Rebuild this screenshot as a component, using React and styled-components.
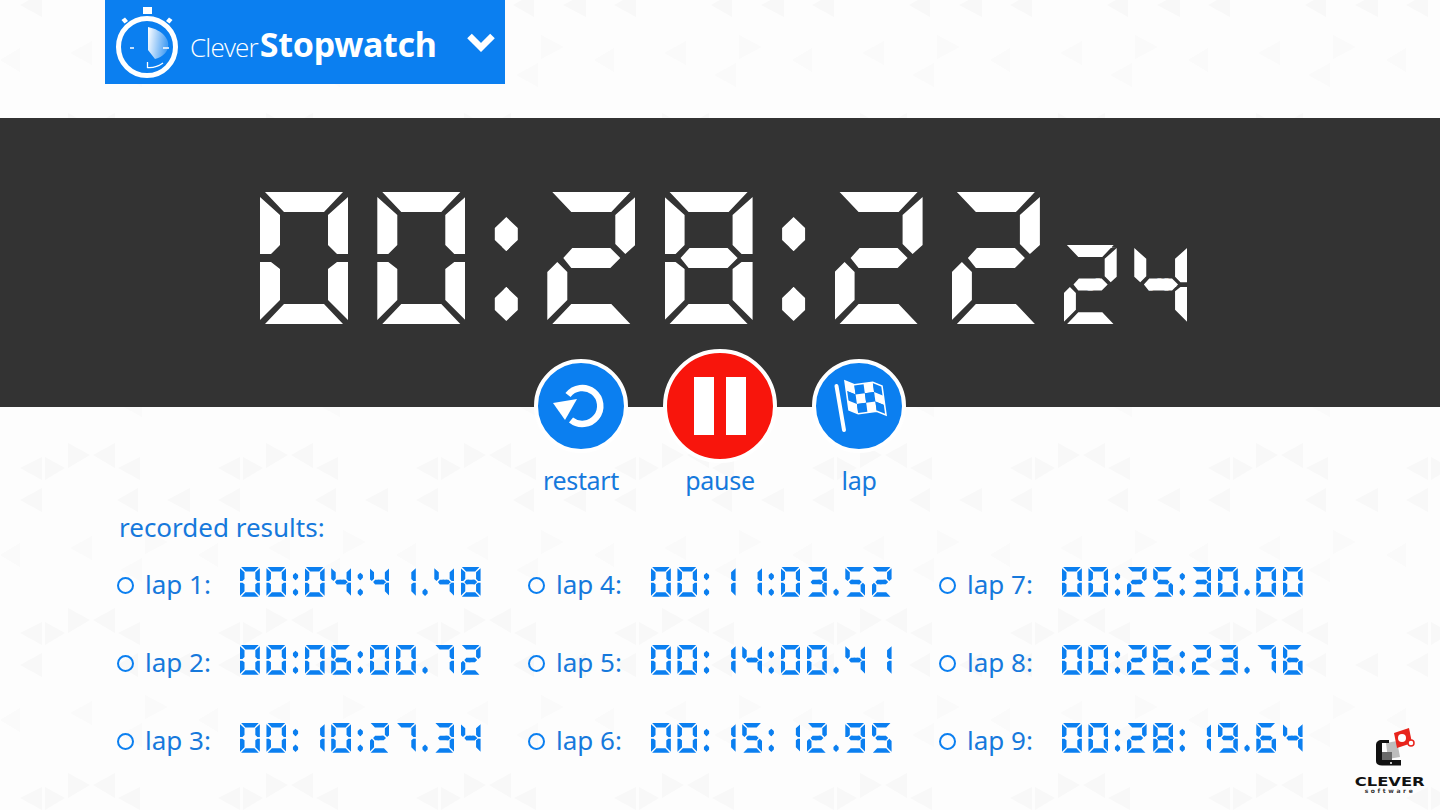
import React from "react";
import styled, { createGlobalStyle } from "styled-components";

const BLUE = "#0b7ff0";
const TEXT_BLUE = "#1679dc";
const FONT = `"Noto Sans", "Open Sans", sans-serif`;

// light triangles behind the page
const tri = (pts, fill = "#f8f8f8") => `<polygon points='${pts}' fill='${fill}'/>`;
const tile = `<svg xmlns='http://www.w3.org/2000/svg' width='198' height='165'>${[
  tri("20,38 42,27 42,50"),
  tri("45,27 65,38 45,50"),
  tri("68,13 90,25 68,38"),
  tri("93,25 115,13 115,38"),
  tri("118,38 140,27 140,50"),
  tri("20,70 42,58 42,82"),
  tri("117,70 138,58 138,82"),
  tri("167,70 190,58 190,82"),
  tri("70,118 92,106 92,130", "#fafafa"),
  tri("145,100 168,112 145,124", "#fafafa"),
  tri("0,125 20,113 20,137", "#fafafa"),
  tri("120,140 142,128 142,152", "#fafafa"),
].join("")}</svg>`;

const GlobalStyle = createGlobalStyle`
  html, body {
    margin: 0;
    height: 100%;
    overflow: hidden;
  }
  body {
    background-color: #fdfdfd;
    background-image: url("data:image/svg+xml,${encodeURIComponent(tile)}");
    background-position: 0 100px;
    font-family: ${FONT};
  }
`;

// seven segment shapes, in a 88 x 132 cell
const SEG = {
  T: [[5, 0], [83, 0], [64, 20], [24, 20]],
  B: [[5, 132], [24, 112], [64, 112], [83, 132]],
  M: [[16, 66], [25, 56], [63, 56], [73, 66], [63, 76], [24, 76]],
  UL: [[0, 5], [20, 23], [20, 53], [11, 62], [0, 62]],
  ULp: [[0, 5], [20, 23], [20, 52], [10, 62], [0, 53]],
  UR: [[88, 5], [68, 23], [68, 53], [77, 62], [88, 62]],
  URp: [[88, 5], [68, 23], [68, 52], [78, 62], [88, 53]],
  LL: [[0, 70], [11, 70], [20, 77], [20, 108], [0, 128]],
  LLp: [[0, 80], [10, 70], [20, 80], [20, 108], [0, 128]],
  LR: [[88, 70], [77, 70], [68, 77], [68, 108], [88, 128]],
  LRp: [[88, 80], [78, 70], [68, 80], [68, 108], [88, 128]],
};

const dot = (y) => [[41, y], [52.5, y + 11], [52.5, y + 23], [41, y + 34], [29.5, y + 23], [29.5, y + 11]];

const SHAPES = {
  0: ["T", "UL", "UR", "LL", "LR", "B"],
  1: ["UR", "LR"],
  2: ["T", "URp", "M", "LLp", "B"],
  3: ["T", "UR", "M", "LR", "B"],
  4: ["ULp", "UR", "M", "LR"],
  5: ["T", "ULp", "M", "LRp", "B"],
  6: ["T", "ULp", "M", "LL", "LR", "B"],
  7: ["T", "UR", "LR"],
  8: ["T", "UL", "UR", "M", "LL", "LR", "B"],
  9: ["T", "UL", "UR", "M", "LR", "B"],
};

// all the parts go in one polygon, joined by lines that are walked back again
const toClip = (parts, w) => {
  const pct = ([x, y]) => `${((x / w) * 100).toFixed(2)}% ${((y / 132) * 100).toFixed(2)}%`;
  const walk = [];
  parts.forEach((p) => walk.push(...p, p[0]));
  parts.slice(0, -1).reverse().forEach((p) => walk.push(p[0]));
  return walk.map(pct).join(",");
};

const clipFor = (ch) => {
  if (ch === ":") return toClip([dot(25), dot(95)], 82);
  if (ch === ".") return toClip([dot(95)], 82);
  return toClip(SHAPES[ch].map((k) => SEG[k]), 88);
};

const Glyph = styled.span`
  flex: none;
  display: block;
  width: ${(p) => p.$w * p.$u}px;
  height: ${(p) => 132 * p.$u}px;
  margin-left: ${(p) => (p.$gap ? 29.3 * p.$u : 0)}px;
  overflow: hidden;
  text-align: center;
  font-size: ${(p) => 80 * p.$u}px;
  line-height: ${(p) => 132 * p.$u}px;
  background: ${(p) => p.$color};
  color: ${(p) => p.$color};
  clip-path: polygon(${(p) => clipFor(p.$ch)});
`;

const ReadoutRow = styled.div`
  display: flex;
  flex: none;
`;

const Readout = ({ value, u, color }) => (
  <ReadoutRow>
    {value.split("").map((ch, i) => {
      const isDigit = /\d/.test(ch);
      const gap = isDigit && i > 0 && /\d/.test(value[i - 1]);
      return (
        <Glyph key={i} $ch={ch} $w={isDigit ? 88 : 82} $u={u} $gap={gap} $color={color}>
          {ch}
        </Glyph>
      );
    })}
  </ReadoutRow>
);

const Page = styled.div`
  width: 1440px;
  height: 810px;
  overflow: hidden;
`;

const Header = styled.div`
  width: 400px;
  height: 84px;
  margin-left: 105px;
  background: ${BLUE};
  display: flex;
  align-items: center;
  color: #fff;
`;

const Brand = styled.div`
  display: flex;
  align-items: baseline;
  width: 277px;
  margin-top: 3px;
`;

const BrandLight = styled.span`
  font-family: "Open Sans", sans-serif;
  font-weight: 300;
  font-size: 26px;
  letter-spacing: -0.8px;
  margin-right: 2px;
`;

const BrandBold = styled.span`
  font-weight: 700;
  font-size: 34px;
  letter-spacing: -0.3px;
`;

const Band = styled.div`
  margin-top: 34px;
  height: 289px;
  box-sizing: border-box;
  padding: 74px 0 0 260px;
  background: #333333;
  display: flex;
  align-items: flex-start;
`;

const SmallTime = styled.div`
  margin-left: 24px;
  margin-top: 53px;
`;

const Controls = styled.div`
  margin-top: -58px;
  display: flex;
  justify-content: center;
`;

const Control = styled.div`
  width: 139px;
  display: flex;
  flex-direction: column;
  align-items: center;
`;

const CircleSlot = styled.div`
  height: 114px;
  display: flex;
  align-items: center;
`;

const Circle = styled.div`
  box-sizing: border-box;
  width: ${(p) => p.$size}px;
  height: ${(p) => p.$size}px;
  border: 4px solid #fff;
  border-radius: 50%;
  background: ${(p) => p.$bg};
  display: flex;
  align-items: center;
  justify-content: center;
`;

const PauseBars = styled.div`
  display: flex;
  gap: 12px;
`;

const PauseBar = styled.div`
  width: 20px;
  height: 58px;
  background: #fff;
`;

const ControlLabel = styled.div`
  font-size: 25px;
  letter-spacing: -0.3px;
  line-height: 34px;
  color: ${TEXT_BLUE};
`;

const ResultsTitle = styled.div`
  margin: 13px 0 0 119px;
  font-size: 26px;
  line-height: 34px;
  color: ${TEXT_BLUE};
`;

const ResultsRow = styled.div`
  display: flex;
  margin: 23px 0 0 117px;
`;

const LapGrid = styled.div`
  display: grid;
  grid-auto-flow: column;
  grid-template-rows: repeat(3, 78px);
  grid-template-columns: repeat(3, 411px);
`;

const LapRow = styled.div`
  display: flex;
  align-items: flex-start;
`;

const Bullet = styled.div`
  box-sizing: border-box;
  flex: none;
  width: 17px;
  height: 17px;
  margin-top: 10px;
  border: 2.5px solid ${BLUE};
  border-radius: 50%;
`;

const LapLabel = styled.div`
  flex: none;
  width: 95px;
  margin-left: 11px;
  font-size: 26px;
  line-height: 34px;
  color: ${TEXT_BLUE};
`;

const Logo = styled.div`
  flex: none;
  width: 70px;
  margin: 160px 0 0 5px;
  display: flex;
  flex-direction: column;
  align-items: center;
  color: #111;
`;

const LogoName = styled.div`
  font-family: "DejaVu Sans", sans-serif;
  font-weight: 700;
  font-size: 12px;
  line-height: 10px;
  transform: scaleX(1.36);
`;

const LogoSub = styled.div`
  font-family: "DejaVu Sans", sans-serif;
  font-weight: 700;
  font-size: 6px;
  line-height: 7px;
  letter-spacing: 2.6px;
  color: #333;
`;

const HeaderIcon = styled.svg`
  flex: none;
  margin-left: 5px;
`;

const StopwatchIcon = () => (
  <HeaderIcon width="80" height="84" viewBox="110 0 80 84">
    <defs>
      <linearGradient id="pie" x1="0" x2="1" y1="0" y2="0.2">
        <stop offset="0" stopColor="#fff" />
        <stop offset="1" stopColor="#fff" stopOpacity="0.25" />
      </linearGradient>
    </defs>
    <circle cx="147" cy="47" r="28.5" fill="none" stroke="#fff" strokeWidth="5" />
    <rect x="143" y="7" width="9" height="7" fill="#fff" />
    <path d="M121.5 20 L125 17.5 L128 21 L124.5 23.5 Z M172.5 20 L169 17.5 L166 21 L169.5 23.5 Z" fill="#fff" />
    <path d="M148 27 C163 30 170 40 168 47 C167 53 162 57 155 59 L148 50 Z" fill="url(#pie)" />
    <path d="M130 48 H134 M163 48 H169" stroke="#fff" strokeWidth="1.5" fill="none" />
    <path d="M147.5 62 V67.5 C154 68 159 66 163 63" stroke="#fff" strokeWidth="1.3" fill="none" />
  </HeaderIcon>
);

const Chevron = () => (
  <svg width="28" height="22" viewBox="0 0 28 22">
    <path d="M2.5 5 L14 16.5 L25.5 5" fill="none" stroke="#fff" strokeWidth="6.5" />
  </svg>
);

const RestartIcon = () => (
  <svg width="86" height="86" viewBox="4 4 86 86">
    <path d="M34 36 A18 18 0 1 1 37 61" fill="none" stroke="#fff" strokeWidth="6.5" />
    <path d="M19 44 L43 40 L31 61 Z" fill="#fff" />
  </svg>
);

// flag cells are bent a little with a sine, so it reads as waving
const flagPoint = (u, v) => [
  33 + 37 * u + 4 * v,
  22 + 29 * v + 5 * u + 2.5 * Math.sin(u * Math.PI * 2),
];

const FlagIcon = () => {
  const cols = 4;
  const rows = 3;
  const cells = [];
  for (let r = 0; r < rows; r++) {
    for (let c = 0; c < cols; c++) {
      const corners = [
        flagPoint(c / cols, r / rows),
        flagPoint((c + 1) / cols, r / rows),
        flagPoint((c + 1) / cols, (r + 1) / rows),
        flagPoint(c / cols, (r + 1) / rows),
      ];
      cells.push(
        <polygon
          key={`${r}-${c}`}
          points={corners.map((p) => p.join(",")).join(" ")}
          fill={(r + c) % 2 === 0 ? "#fff" : BLUE}
        />
      );
    }
  }
  const outline = [
    flagPoint(0, 0),
    flagPoint(0.25, 0),
    flagPoint(0.5, 0),
    flagPoint(0.75, 0),
    flagPoint(1, 0),
    flagPoint(1, 1),
    flagPoint(0.75, 1),
    flagPoint(0.5, 1),
    flagPoint(0.25, 1),
    flagPoint(0, 1),
  ];
  return (
    <svg width="86" height="86" viewBox="4 4 86 86">
      <path d="M24.5 27 L32 71" stroke="#fff" strokeWidth="4" strokeLinecap="round" />
      {cells}
      <polygon points={outline.map((p) => p.join(",")).join(" ")} fill="none" stroke="#fff" strokeWidth="1.6" />
    </svg>
  );
};

const LogoIcon = () => (
  <svg width="70" height="50" viewBox="0 -2 70 50">
    <path d="M31 14 L42 12 L45 28 L33 30 Z" fill="#bdbdbd" />
    <rect x="27" y="23" width="10" height="8" fill="#6a6a6a" />
    <path d="M27 11 H34 V14 H27 V31 H46 V36.5 H27 C23 36.5 21 35 21 32 V16 C21 13 23 11 27 11 Z" fill="#111" />
    <circle cx="36" cy="34" r="1" fill="#fff" />
    <path d="M39 4 L54 -1 L57 14 L42 19 Z" fill="#e8241c" />
    <circle cx="47" cy="9" r="4" fill="#fff" />
    <circle cx="56" cy="14" r="3" fill="#fff" stroke="#e8241c" strokeWidth="1.5" />
  </svg>
);

const LAPS = [
  ["lap 1:", "00:04:41.48"],
  ["lap 2:", "00:06:00.72"],
  ["lap 3:", "00:10:27.34"],
  ["lap 4:", "00:11:03.52"],
  ["lap 5:", "00:14:00.41"],
  ["lap 6:", "00:15:12.95"],
  ["lap 7:", "00:25:30.00"],
  ["lap 8:", "00:26:23.76"],
  ["lap 9:", "00:28:19.64"],
];

export default function App() {
  return (
    <Page>
      <GlobalStyle />
      <Header>
        <StopwatchIcon />
        <Brand>
          <BrandLight>Clever</BrandLight>
          <BrandBold>Stopwatch</BrandBold>
        </Brand>
        <Chevron />
      </Header>

      <Band>
        <Readout value="00:28:22" u={1} color="#ffffff" />
        <SmallTime>
          <Readout value="24" u={0.6} color="#ffffff" />
        </SmallTime>
      </Band>

      <Controls>
        <Control>
          <CircleSlot>
            <Circle $size={94} $bg={BLUE}>
              <RestartIcon />
            </Circle>
          </CircleSlot>
          <ControlLabel>restart</ControlLabel>
        </Control>
        <Control>
          <CircleSlot>
            <Circle $size={114} $bg="#f8150c">
              <PauseBars>
                <PauseBar />
                <PauseBar />
              </PauseBars>
            </Circle>
          </CircleSlot>
          <ControlLabel>pause</ControlLabel>
        </Control>
        <Control>
          <CircleSlot>
            <Circle $size={94} $bg={BLUE}>
              <FlagIcon />
            </Circle>
          </CircleSlot>
          <ControlLabel>lap</ControlLabel>
        </Control>
      </Controls>

      <ResultsTitle>recorded results:</ResultsTitle>

      <ResultsRow>
        <LapGrid>
          {LAPS.map(([label, time]) => (
            <LapRow key={label}>
              <Bullet />
              <LapLabel>{label}</LapLabel>
              <Readout value={time} u={0.2255} color={BLUE} />
            </LapRow>
          ))}
        </LapGrid>
        <Logo>
          <LogoIcon />
          <LogoName>CLEVER</LogoName>
          <LogoSub>software</LogoSub>
        </Logo>
      </ResultsRow>
    </Page>
  );
}
